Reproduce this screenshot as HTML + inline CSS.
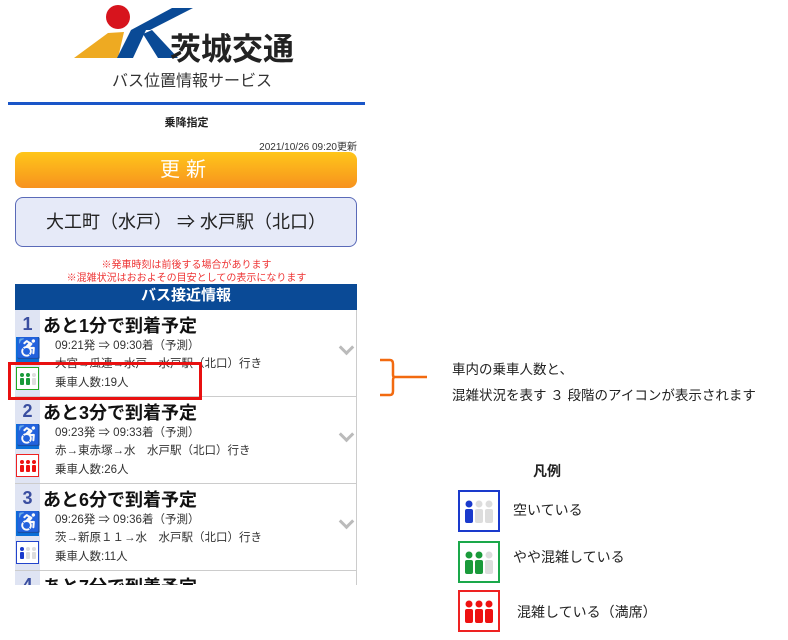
<!DOCTYPE html>
<html><head><meta charset="utf-8"><style>
body{margin:0;width:788px;height:640px;background:#fff;position:relative;overflow:hidden;font-family:"Liberation Sans","Noto Sans CJK JP",sans-serif;color:#222}
.a{position:absolute;white-space:nowrap}
.row{position:absolute;left:15px;width:341px;height:86px;border-bottom:1px solid #ccc;border-right:1px solid #ccc;background:#fff}
.num{position:absolute;left:0;top:0;width:25px;height:100%;background:#dfe4f3;color:#3a4ea0;font-weight:bold;font-size:18px;text-align:center;line-height:28px}
.tt{position:absolute;left:28px;top:2px;font-size:18px;font-weight:bold;color:#111}
.ln{position:absolute;left:40px;font-size:11.5px;color:#333}
.wc{position:absolute;left:1px;top:27px;width:23px;height:25px;background:#0a6fd8;color:#fff;font-size:20px;text-align:center;line-height:25px}
.ci{position:absolute;left:1px;top:57px;width:21px;height:21px;border:1px solid;background:#fff}
.chev{position:absolute;left:326px;top:32px;width:8px;height:8px;border-right:3px solid #bbb;border-bottom:3px solid #bbb;transform:rotate(45deg)}
</style></head><body>
<svg class="a" style="left:0;top:0" width="200" height="65">
<polygon points="74,58 118,58 124,32 108,33" fill="#eeaa22"/>
<polygon points="117,58 133,58 146,30 131,30" fill="#0a4a96"/>
<polygon points="131,30 150,30 193,8 172,8" fill="#0a4a96"/>
<polygon points="143,34 158,58 178,58 152,30" fill="#0a4a96"/>
<circle cx="118" cy="17" r="12" fill="#d7141d"/>
</svg>
<div class="a" style="left:170px;top:24px;font-size:31px;font-weight:bold;color:#222">茨城交通</div>
<div class="a" style="left:112px;top:67px;font-size:16px;color:#333">バス位置情報サービス</div>
<div class="a" style="left:8px;top:102px;width:357px;height:3px;background:#1a56c8"></div>
<div class="a" style="left:0;width:373px;top:114px;text-align:center;font-size:11px;font-weight:bold">乗降指定</div>
<div class="a" style="right:431px;top:138px;font-size:10px;color:#333">2021/10/26 09:20更新</div>
<div class="a" style="left:15px;top:152px;width:342px;height:36px;border-radius:8px;background:linear-gradient(#ffc61a,#f7921e);color:#fff;font-size:20px;text-align:center;line-height:36px;letter-spacing:6px">更新</div>
<div class="a" style="left:15px;top:197px;width:340px;height:48px;border:1px solid #5a6ab8;border-radius:8px;background:#e6eaf8;font-size:18px;text-align:center;line-height:48px;color:#222">大工町（水戸） ⇒ 水戸駅（北口）</div>
<div class="a" style="left:0;width:373px;top:256px;text-align:center;font-size:10px;color:#e33">※発車時刻は前後する場合があります</div>
<div class="a" style="left:0;width:373px;top:269px;text-align:center;font-size:10px;color:#e33">※混雑状況はおおよその目安としての表示になります</div>
<div class="a" style="left:15px;top:284px;width:342px;height:26px;background:#0a4a96;color:#fff;font-weight:bold;font-size:15px;text-align:center;line-height:24px">バス接近情報</div>

<div class="row" style="top:310px"><div class="num">1</div><div class="tt">あと1分で到着予定</div>
<div class="ln" style="top:27px">09:21発 ⇒ 09:30着（予測）</div><div class="ln" style="top:45px">大宮→瓜連→水戸　水戸駅（北口）行き</div><div class="ln" style="top:64px">乗車人数:19人</div>
<div class="wc">♿</div><div class="ci" style="border-color:#2a2"><svg width="21" height="21"><g fill="#1a9a3a"><circle cx="5" cy="7" r="2"/><rect x="3" y="10" width="4" height="7" rx="1"/><circle cx="11" cy="7" r="2"/><rect x="9" y="10" width="4" height="7" rx="1"/></g><g fill="#ddd"><circle cx="17" cy="7" r="2"/><rect x="15" y="10" width="4" height="7" rx="1"/></g></svg></div><div class="chev"></div></div>

<div class="row" style="top:397px"><div class="num">2</div><div class="tt">あと3分で到着予定</div>
<div class="ln" style="top:27px">09:23発 ⇒ 09:33着（予測）</div><div class="ln" style="top:45px">赤→東赤塚→水　水戸駅（北口）行き</div><div class="ln" style="top:64px">乗車人数:26人</div>
<div class="wc">♿</div><div class="ci" style="border-color:#e22"><svg width="21" height="21"><g fill="#e11"><circle cx="5" cy="7" r="2"/><rect x="3" y="10" width="4" height="7" rx="1"/><circle cx="11" cy="7" r="2"/><rect x="9" y="10" width="4" height="7" rx="1"/><circle cx="17" cy="7" r="2"/><rect x="15" y="10" width="4" height="7" rx="1"/></g></svg></div><div class="chev"></div></div>

<div class="row" style="top:484px"><div class="num">3</div><div class="tt">あと6分で到着予定</div>
<div class="ln" style="top:27px">09:26発 ⇒ 09:36着（予測）</div><div class="ln" style="top:45px">茨→新原１１→水　水戸駅（北口）行き</div><div class="ln" style="top:64px">乗車人数:11人</div>
<div class="wc">♿</div><div class="ci" style="border-color:#24c"><svg width="21" height="21"><g fill="#1a3acc"><circle cx="5" cy="7" r="2"/><rect x="3" y="10" width="4" height="7" rx="1"/></g><g fill="#ddd"><circle cx="11" cy="7" r="2"/><rect x="9" y="10" width="4" height="7" rx="1"/><circle cx="17" cy="7" r="2"/><rect x="15" y="10" width="4" height="7" rx="1"/></g></svg></div><div class="chev"></div></div>

<div class="a" style="left:15px;top:571px;width:341px;height:14px;overflow:hidden;border-right:1px solid #ccc"><div class="num" style="height:30px">4</div><div class="tt">あと7分で到着予定</div></div>

<div class="a" style="left:8px;top:362px;width:188px;height:32px;border:3px solid #e81010"></div>

<svg class="a" style="left:378px;top:358px" width="55" height="40"><path d="M2 2 H12 Q15 2 15 6 V17 Q15 19 17 19 H49 M17 19 Q15 19 15 22 V33 Q15 37 12 37 H2" fill="none" stroke="#f26a10" stroke-width="2.5"/></svg>
<div class="a" style="left:452px;top:358px;font-size:13.5px;color:#222">車内の乗車人数と、</div>
<div class="a" style="left:452px;top:384px;font-size:13.5px;color:#222">混雑状況を表す ３ 段階のアイコンが表示されます</div>
<div class="a" style="left:533px;top:461px;font-size:14px;font-weight:bold">凡例</div>

<svg class="a" style="left:458px;top:490px" width="42" height="42"><rect x="1" y="1" width="40" height="40" fill="#fff" stroke="#1a3acc" stroke-width="2"/><g fill="#1a3acc"><circle cx="11" cy="14" r="3.5"/><rect x="7" y="19" width="8" height="14" rx="2"/></g><g fill="#ddd"><circle cx="21" cy="14" r="3.5"/><rect x="17" y="19" width="8" height="14" rx="2"/><circle cx="31" cy="14" r="3.5"/><rect x="27" y="19" width="8" height="14" rx="2"/></g></svg>
<div class="a" style="left:513px;top:500px;font-size:14px">空いている</div>
<svg class="a" style="left:458px;top:541px" width="42" height="42"><rect x="1" y="1" width="40" height="40" fill="#fff" stroke="#1aa84a" stroke-width="2"/><g fill="#1a9a3a"><circle cx="11" cy="14" r="3.5"/><rect x="7" y="19" width="8" height="14" rx="2"/><circle cx="21" cy="14" r="3.5"/><rect x="17" y="19" width="8" height="14" rx="2"/></g><g fill="#ddd"><circle cx="31" cy="14" r="3.5"/><rect x="27" y="19" width="8" height="14" rx="2"/></g></svg>
<div class="a" style="left:513px;top:547px;font-size:14px">やや混雑している</div>
<svg class="a" style="left:458px;top:590px" width="42" height="42"><rect x="1" y="1" width="40" height="40" fill="#fff" stroke="#e22" stroke-width="2"/><g fill="#e11"><circle cx="11" cy="14" r="3.5"/><rect x="7" y="19" width="8" height="14" rx="2"/><circle cx="21" cy="14" r="3.5"/><rect x="17" y="19" width="8" height="14" rx="2"/><circle cx="31" cy="14" r="3.5"/><rect x="27" y="19" width="8" height="14" rx="2"/></g></svg>
<div class="a" style="left:517px;top:602px;font-size:14px">混雑している（満席）</div>
</body></html>
